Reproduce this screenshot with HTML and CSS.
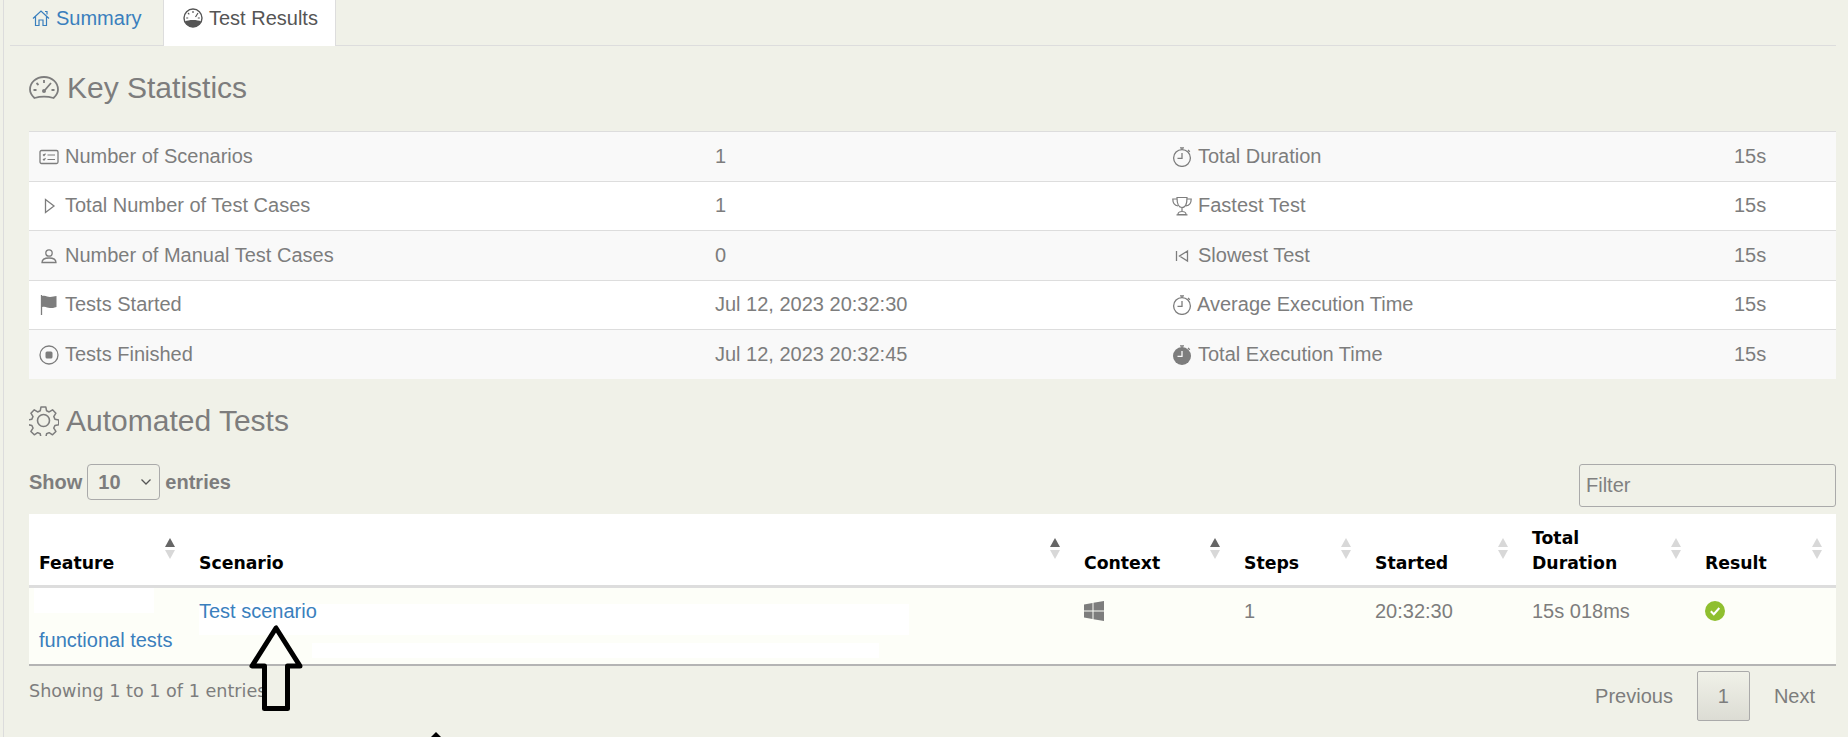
FILE: index.html
```html
<!DOCTYPE html>
<html lang="en">
<head>
<meta charset="utf-8">
<title>Test Results</title>
<link rel="stylesheet" href="styles.css">
</head>
<body>
<svg class="sprite" width="0" height="0" aria-hidden="true">
  <defs>
    <symbol id="clock" viewBox="0 0 20 20">
      <circle cx="10" cy="11" r="8.400" fill="none" stroke="currentColor" stroke-width="1.300"/>
      <path d="M10 6V11.400H5.500M8 .8h4M10 .8v1.800M16 3l1.800 1.800" fill="none" stroke="currentColor" stroke-width="1.300"/>
    </symbol>
  </defs>
</svg>
<div class="page">
  <nav class="tabs">
    <a class="tab link" href="#">
      <svg class="tab-icon" viewBox="0 0 18 18"><path d="M1 9.500 9 2l8 7.500M3.500 7.500V16.500H7V11h4v5.500h3.500V7.500M13 2.500h2v3" fill="none" stroke="currentColor" stroke-width="1.200"/></svg>
      Summary
    </a>
    <a class="tab active" href="#">
      <svg class="tab-icon wide" viewBox="0 0 20 20"><circle cx="10" cy="10" r="9" fill="none" stroke="currentColor" stroke-width="1.400"/><path d="M2 13.500c3-2 13-2 16 0-1 3-4 5.500-8 5.500s-7-2.500-8-5.500z" fill="currentColor"/><path d="M10 3v2M5 5l1.300 1.300M15 5l-2.500 4M3.200 10h2M14.800 10h2" stroke="currentColor" stroke-width="1.200" fill="none"/></svg>
      Test Results
    </a>
  </nav>

  <h2 class="section-title">
    <svg class="title-icon" viewBox="0 0 30 24"><path d="M5.500 22C3 19.700 1 17 1 13.500 1 6.500 7 1 15 1s14 5.500 14 12.500c0 3.500-2 6.200-4.500 8.500-6-1.800-13-1.800-19 0z" fill="none" stroke="currentColor" stroke-width="1.800"/><path d="M15 4v3M7.500 7l2 2M4.500 14h3M22.500 14h3M22 7l-6 7" fill="none" stroke="currentColor" stroke-width="1.800"/><circle cx="15" cy="15" r="2" fill="currentColor"/></svg>
    Key Statistics
  </h2>

  <table class="stats">
    <tbody>
      <tr>
        <td class="c1"><svg class="i" viewBox="0 0 20 20"><rect x="1" y="3.500" width="18" height="13" rx="1.500" fill="none" stroke="currentColor" stroke-width="1.300"/><path d="M4 7.500l1 1 1.500-1.800M4 12l1 1 1.500-1.800M8.500 8h7.500M8.500 12.500h7.500" fill="none" stroke="currentColor" stroke-width="1.200"/></svg>Number of Scenarios</td>
        <td class="c2">1</td>
        <td class="c3"><svg class="i" viewBox="0 0 20 20"><use href="#clock"/></svg>Total Duration</td>
        <td>15s</td>
      </tr>
      <tr>
        <td class="c1"><svg class="i" viewBox="0 0 20 20"><path d="M6.500 3.500 15 10l-8.500 6.500z" fill="none" stroke="currentColor" stroke-width="1.300"/></svg>Total Number of Test Cases</td>
        <td class="c2">1</td>
        <td class="c3"><svg class="i" viewBox="0 0 20 20"><path d="M5 1.500h10c0 6-1 10-5 10s-5-4-5-10zM5 3H.8c0 4 2 6.500 5.200 7M15 3h4.200c0 4-2 6.500-5.200 7M10 11.500v4M6 18.500c0-2 1.500-3 4-3s4 1 4 3zM4.500 18.800h11" fill="none" stroke="currentColor" stroke-width="1.200"/></svg>Fastest Test</td>
        <td>15s</td>
      </tr>
      <tr>
        <td class="c1"><svg class="i" viewBox="0 0 20 20"><circle cx="10" cy="7" r="3.200" fill="none" stroke="currentColor" stroke-width="1.300"/><path d="M3 16.500c0-3 3-4.500 7-4.500s7 1.500 7 4.500z" fill="none" stroke="currentColor" stroke-width="1.300"/></svg>Number of Manual Test Cases</td>
        <td class="c2">0</td>
        <td class="c3"><svg class="i" viewBox="0 0 20 20"><path d="M4.500 5v10M15.500 5 7.500 10l8 5z" fill="none" stroke="currentColor" stroke-width="1.300"/></svg>Slowest Test</td>
        <td>15s</td>
      </tr>
      <tr>
        <td class="c1"><svg class="i" viewBox="0 0 20 20"><path d="M2.500 0v20" stroke="currentColor" stroke-width="1.300" fill="none"/><path d="M3 1c4-1 5 1 8 1s4-1 6.500-1v11c-3 1-4 1-6.500 1-3 0-4-2-8-1z" fill="currentColor"/></svg>Tests Started</td>
        <td class="c2">Jul 12, 2023 20:32:30</td>
        <td class="c3"><svg class="i tight" viewBox="0 0 20 20"><use href="#clock"/></svg>Average Execution Time</td>
        <td>15s</td>
      </tr>
      <tr>
        <td class="c1"><svg class="i" viewBox="0 0 20 20"><circle cx="10" cy="10" r="9" fill="none" stroke="currentColor" stroke-width="1.300"/><rect x="6.500" y="6.500" width="7" height="7" rx="1.500" fill="currentColor"/></svg>Tests Finished</td>
        <td class="c2">Jul 12, 2023 20:32:45</td>
        <td class="c3"><svg class="i" viewBox="0 0 20 20"><circle cx="10" cy="11" r="9" fill="currentColor"/><path d="M8 .8h4M10 .8v1.800M16 3l1.800 1.800" stroke="currentColor" stroke-width="1.300" fill="none"/><path d="M10 6v5.400H5.500" stroke="#f9f9f9" stroke-width="1.300" fill="none"/></svg>Total Execution Time</td>
        <td>15s</td>
      </tr>
    </tbody>
  </table>

  <h2 class="section-title second">
    <svg class="title-icon gear" viewBox="0 0 30 30"><path d="M12.500 1.500h5l.8 4 2.700 1.200 3.500-2.200 3.500 3.500-2.200 3.500 1.200 2.700 4 .8v5l-4 .8-1.200 2.700 2.200 3.500-3.500 3.500-3.500-2.200-2.700 1.200-.8 4h-5l-.8-4-2.700-1.200-3.500 2.200-3.500-3.500 2.200-3.500-1.200-2.700-4-.8v-5l4-.8 1.200-2.700-2.200-3.500 3.500-3.500 3.500 2.200 2.700-1.200z" transform="translate(0 -0.500) scale(.96)" fill="none" stroke="currentColor" stroke-width="1.600" stroke-linejoin="round"/><circle cx="14.500" cy="14.500" r="6" fill="none" stroke="currentColor" stroke-width="1.600"/></svg>
    Automated Tests
  </h2>

  <div class="controls">
    <label class="length">Show <span class="select">10<svg class="chev" viewBox="0 0 12 8"><path d="M1.500 1.500 6 6l4.500-4.500" fill="none" stroke="currentColor" stroke-width="1.300"/></svg></span> entries</label>
    <div class="filter">Filter</div>
  </div>

  <table class="results">
    <thead>
      <tr>
        <th class="w-feature"><span class="sort up"></span>Feature</th>
        <th class="w-scenario"><span class="sort up"></span>Scenario</th>
        <th class="w-context"><span class="sort up"></span>Context</th>
        <th class="w-steps"><span class="sort"></span>Steps</th>
        <th class="w-started"><span class="sort"></span>Started</th>
        <th class="w-duration"><span class="sort"></span>Total<br>Duration</th>
        <th class="w-result"><span class="sort"></span>Result</th>
      </tr>
    </thead>
    <tbody>
      <tr>
        <td class="feature"><span class="patch"></span><a href="#">functional tests</a></td>
        <td class="scenario"><span class="patch one"></span><span class="patch two"></span><a href="#">Test scenario</a></td>
        <td><svg class="win" viewBox="0 0 20 20"><path d="M0 3.500 8.500 2v7.500H0zM9.500 1.800 20 0v9.500H9.500zM0 10.500h8.500V18L0 16.500zM9.500 10.500H20V20L9.500 18.200z" fill="currentColor"/></svg></td>
        <td>1</td>
        <td>20:32:30</td>
        <td>15s 018ms</td>
        <td><svg class="ok" viewBox="0 0 20 20"><circle cx="10" cy="10" r="10" fill="#8fbf2f"/><path d="M5.800 10.200 8.800 13.200 14.300 7" fill="none" stroke="#fff" stroke-width="2"/></svg></td>
      </tr>
    </tbody>
  </table>

  <div class="footer">
    <div class="info">Showing 1 to 1 of 1 entries</div>
    <div class="pager">
      <span class="page-btn">Previous</span>
      <span class="page-btn current">1</span>
      <span class="page-btn">Next</span>
    </div>
  </div>

  <svg class="arrow" viewBox="0 0 58 90"><path d="M29 5 5 43H17.500V85.500H40.500V43H53z" fill="none" stroke="#000" stroke-width="5" stroke-linejoin="round"/></svg>
  <svg class="arrow-tip" viewBox="0 0 10 8"><path d="M5 0 0 5v3h10V5z" fill="#000"/></svg>
</div>
</body>
</html>
```
FILE: styles.css
```css
* { box-sizing: border-box; }
html, body { margin: 0; height: 100%; }
body {
  background: #f0f1e8;
  font-family: "Liberation Sans", Arial, sans-serif;
  font-size: 20px;
  color: #7d7d7d;
  overflow: hidden;
}
a { text-decoration: none; color: #3a7fbd; }
.sprite { position: absolute; }
.page {
  position: relative;
  height: 737px;
  margin-left: 3px;
  border-left: 1px solid #dcdcdc;
  padding: 0 12px 0 25px;
}
.tabs {
  display: flex;
  height: 46px;
  margin-left: -19px;
  border-bottom: 1px solid #ddd;
}
.tab {
  display: flex;
  align-items: center;
  gap: 6px;
  height: 46px;
  font-size: 20px;
}
.tab.link { width: 153px; padding: 0 0 10px 22px; }
.tab.active {
  width: 173px;
  padding: 0 0 10px 19px;
  color: #555;
  background: #fff;
  border-right: 1px solid #ddd;
  border-left: 1px solid #ddd;
}
.tab-icon { width: 18px; height: 18px; }
.tab-icon.wide { width: 20px; height: 20px; }
.section-title {
  display: flex;
  align-items: center;
  gap: 8px;
  height: 36px;
  margin: 24px 0 25px;
  font-size: 30px;
  font-weight: 400;
  color: #7d7d7d;
}
.section-title.second { gap: 7px; margin: 0 0 25px; }
.title-icon { width: 30px; height: 24px; }
.gear { height: 30px; }
.stats {
  width: 100%;
  table-layout: fixed;
  border-collapse: collapse;
  border-top: 1px solid #ddd;
  margin-bottom: 24px;
}
.stats td {
  height: 49.500px;
  padding: 0 10px;
  background: #fff;
  border-bottom: 1px solid #ddd;
  vertical-align: middle;
  white-space: nowrap;
}
.stats tr:nth-child(odd) td { background: #f9f9f9; }
.stats tr:last-child td { border-bottom: 0; }
.c1 { width: 686px; }
.c2 { width: 447px; }
.stats td.c2 { padding-left: 0; }
.c3 { width: 562px; }
.i { width: 20px; height: 20px; margin-right: 6px; vertical-align: -4px; }
.i.tight { margin-right: 5px; }
.controls {
  display: flex;
  justify-content: space-between;
  align-items: flex-start;
  height: 43px;
  margin-bottom: 7px;
}
.length { display: flex; align-items: center; gap: 5px; height: 36px; font-weight: 700; font-size: 20px; }
.select {
  display: flex;
  align-items: center;
  justify-content: space-between;
  width: 73px;
  height: 36px;
  padding: 0 7px 0 10px;
  color: #7d7d7d;
  border: 1px solid #aaa;
  border-radius: 4px;
  font-size: 20px;
  font-weight: 700;
}
.chev { width: 12px; height: 8px; color: #555; }
.filter {
  width: 257px;
  height: 43px;
  padding: 0 6px;
  line-height: 41px;
  color: #808080;
  border: 1px solid #aaa;
  border-radius: 3px;
}
.results {
  width: 100%;
  table-layout: fixed;
  border-collapse: collapse;
}
.results th {
  position: relative;
  height: 72px;
  padding: 0 10px 9px;
  background: #fff;
  color: #000;
  font-family: "DejaVu Sans", sans-serif;
  font-size: 17.300px;
  line-height: 25px;
  text-align: left;
  vertical-align: bottom;
  border-bottom: 3px solid #ddd;
}
.sort {
  position: absolute;
  top: 24px;
  right: 14px;
  width: 10px;
  height: 21px;
}
.sort::before, .sort::after {
  content: "";
  position: absolute;
  left: 0;
  border-left: 5px solid transparent;
  border-right: 5px solid transparent;
}
.sort::before { top: 0; border-bottom: 9px solid #d8d8d8; }
.sort::after { bottom: 0; border-top: 9px solid #d8d8d8; }
.sort.up::before { border-bottom-color: #666; }
.w-feature { width: 160px; }
.w-scenario { width: 885px; }
.w-context { width: 160px; }
.w-steps { width: 131px; }
.w-started { width: 157px; }
.w-duration { width: 173px; }
.results td {
  position: relative;
  height: 79px;
  padding: 11px 10px 0;
  background: #fdfef8;
  vertical-align: top;
  border-bottom: 2px solid #b4b4b4;
  line-height: 25px;
}
.results td a { position: relative; }
.results td.feature { padding-top: 40px; }
.patch { position: absolute; background: #fff; }
.feature .patch { left: 5px; top: 0; width: 120px; height: 25px; }
.patch.one { left: 10px; top: 16px; width: 710px; height: 31px; }
.patch.two { left: 123px; top: 55px; width: 567px; height: 15px; }
.win { width: 20px; height: 20px; color: #7d7d7d; display: block; margin-top: 2px; }
.ok { width: 20px; height: 20px; display: block; margin-top: 2px; }
.footer {
  display: flex;
  justify-content: space-between;
  align-items: flex-start;
  padding-top: 5px;
}
.info { padding-top: 10px; font-family: "DejaVu Sans", sans-serif; font-size: 17.600px; }
.pager { display: flex; align-items: center; }
.page-btn { padding: 0 20px; line-height: 48px; height: 50px; border: 1px solid transparent; }
.page-btn.current {
  width: 53px;
  margin: 0 3px;
  text-align: center;
  padding: 0;
  border: 1px solid #aaa;
  border-radius: 2px;
  background: linear-gradient(#f0f1e8, #dcdcd4);
}
.arrow { position: absolute; left: 243px; top: 623px; width: 58px; height: 90px; }
.arrow-tip { position: absolute; left: 427px; top: 732px; width: 10px; height: 8px; }
```
